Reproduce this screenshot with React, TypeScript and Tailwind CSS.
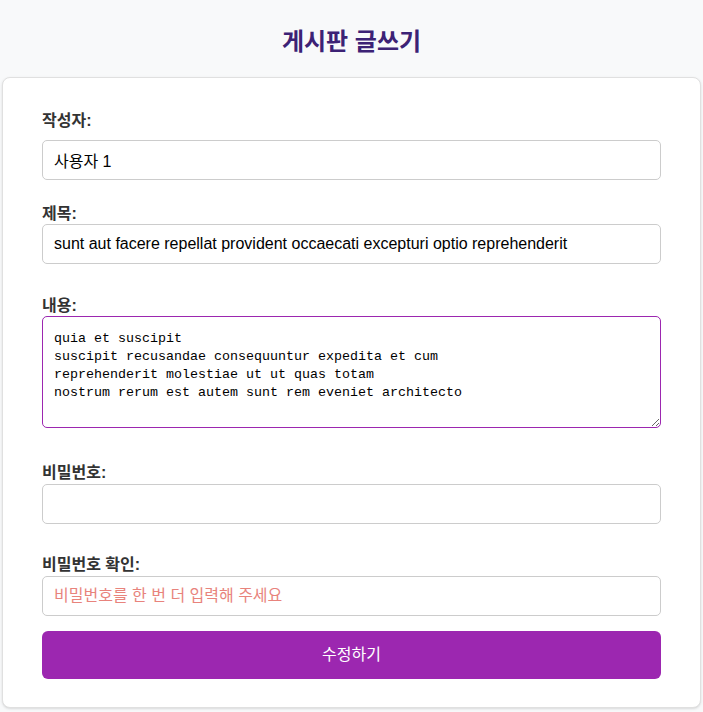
import React, { useEffect, useRef } from 'react';

const content = `quia et suscipit
suscipit recusandae consequuntur expedita et cum
reprehenderit molestiae ut ut quas totam
nostrum rerum est autem sunt rem eveniet architecto`;

const font = { fontFamily: '"Liberation Sans", "Noto Sans CJK KR", sans-serif' };

const App = () => {
  const areaRef = useRef<HTMLTextAreaElement>(null);

  useEffect(() => {
    const el = areaRef.current;
    if (el) {
      el.focus();
      el.setSelectionRange(el.value.length, el.value.length);
    }
  }, []);

  const inputClass =
    'block w-full h-10 px-[11px] border border-[#cccccc] rounded-[5px] text-[16px] text-black bg-white outline-none';
  const labelClass = 'block h-5 leading-5 text-[16px] font-bold text-[#333333]';

  return (
    <div className="min-h-[712px] bg-[#f8f9fa]" style={font}>
      <div className="h-[77px] pt-[6px] flex items-center justify-center">
        <h1 className="text-[24px] font-bold text-[#3c2275]">게시판 글쓰기</h1>
      </div>

      <div className="mx-[2px] bg-white border border-[#e0e0e0] rounded-lg shadow-sm px-[39px] pt-[33px] pb-[28px]">
        <form className="flex flex-col" onSubmit={(e) => e.preventDefault()}>
          <label className={`${labelClass} mb-[9px]`}>작성자:</label>
          <input className={inputClass} defaultValue="사용자 1" />

          <label className={`${labelClass} mt-[24px]`}>제목:</label>
          <input
            className={inputClass}
            defaultValue="sunt aut facere repellat provident occaecati excepturi optio reprehenderit"
          />

          <label className={`${labelClass} mt-[32px]`}>내용:</label>
          <textarea
            ref={areaRef}
            defaultValue={content}
            className="block w-full h-[112px] px-[11px] pt-[13px] pb-[9px] border border-[#9c27b0] rounded-[5px] text-[13.33px] leading-[18px] text-black bg-white outline-none resize-y"
            style={{ fontFamily: '"Liberation Mono", "Noto Sans CJK KR", monospace' }}
          />

          <label className={`${labelClass} mt-[35px] mb-[1px]`}>비밀번호:</label>
          <input type="password" className={inputClass} />

          <label className={`${labelClass} mt-[31px] mb-[1px]`}>비밀번호 확인:</label>
          <input
            type="password"
            className={`${inputClass} placeholder:text-[#e8837c]`}
            placeholder="비밀번호를 한 번 더 입력해 주세요"
          />

          <button
            type="submit"
            className="mt-[15px] h-12 w-full rounded-md bg-[#9c27b0] text-white text-[16px]"
          >
            수정하기
          </button>
        </form>
      </div>
    </div>
  );
};

export default App;
